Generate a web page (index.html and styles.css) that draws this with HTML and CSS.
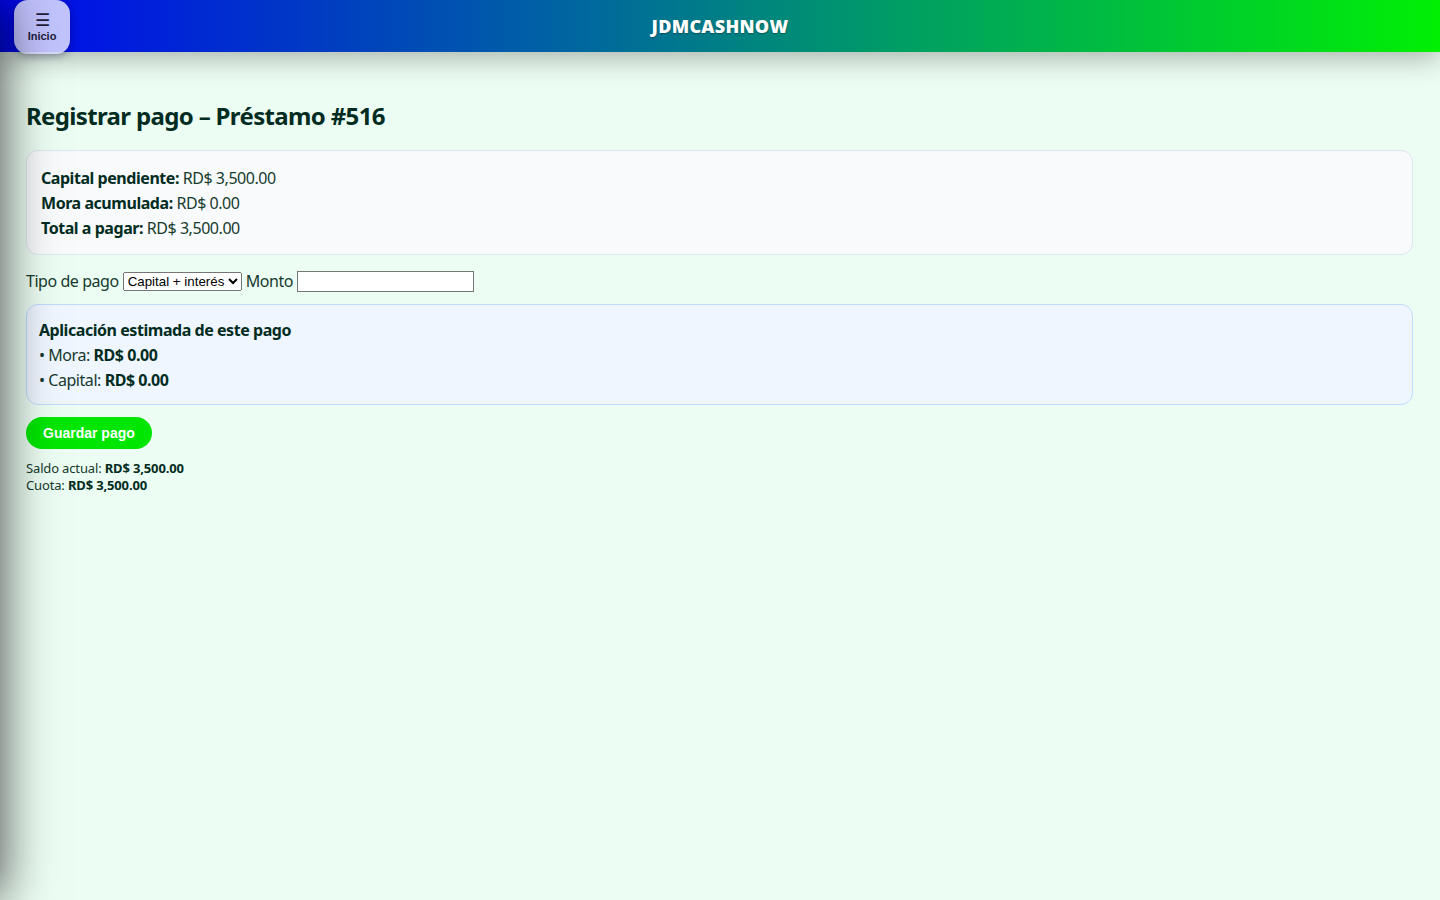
FILE: index.html
```html
<!DOCTYPE html>
<html lang="es">
<head>
<meta charset="utf-8">
<title>Registrar pago</title>
<link rel="stylesheet" href="styles.css">
</head>
<body>
<aside class="drawer"></aside>
<header class="topbar">
  <button class="menu-btn" type="button">
    <span class="menu-icon">☰</span>
    <span class="menu-label">Inicio</span>
  </button>
  <div class="brand">JDMCASHNOW</div>
</header>
<main class="page">
  <h2 class="title">Registrar pago – Préstamo #516</h2>
  <section class="card summary">
    <div><b>Capital pendiente:</b> RD$ 3,500.00</div>
    <div><b>Mora acumulada:</b> RD$ 0.00</div>
    <div><b>Total a pagar:</b> RD$ 3,500.00</div>
  </section>
  <form class="pay-form">
    <div class="row">
      <label>Tipo de pago</label>
      <select><option>Capital + interés</option></select>
      <label>Monto</label>
      <input type="text">
    </div>
    <section class="card estimate">
      <div class="est-title">Aplicación estimada de este pago</div>
      <div>• Mora: <b>RD$ 0.00</b></div>
      <div>• Capital: <b>RD$ 0.00</b></div>
    </section>
    <button class="save-btn" type="button">Guardar pago</button>
  </form>
  <div class="meta">
    <div>Saldo actual: <b>RD$ 3,500.00</b></div>
    <div>Cuota: <b>RD$ 3,500.00</b></div>
  </div>
</main>
</body>
</html>
```
FILE: styles.css
```css
html, body {
  margin: 0;
  padding: 0;
}
body {
  background: #ecfdf3;
  color: #163a2e;
  font-family: "Noto Sans", "Open Sans", sans-serif;
  font-size: 16px;
  letter-spacing: -0.45px;
  min-height: 900px;
  overflow: hidden;
}
b { color: #022c22; }

.drawer {
  position: fixed;
  top: 0;
  left: -280px;
  width: 280px;
  height: 100vh;
  background: #fff;
  box-shadow: 0 0 50px rgba(0, 0, 0, 0.75);
  z-index: 30;
}

.topbar {
  position: relative;
  height: 52px;
  background: linear-gradient(90deg, #0008ee 0%, #0066a0 40%, #009c66 62%, #00f004 100%);
  box-shadow: 0 6px 28px rgba(0, 0, 0, 0.3);
  display: flex;
  align-items: flex-start;
  justify-content: center;
  z-index: 10;
  letter-spacing: 0;
}
.menu-btn {
  position: absolute;
  left: 14px;
  top: 0;
  width: 56px;
  height: 54px;
  border: none;
  border-radius: 14px;
  background: rgba(220, 220, 255, 0.88);
  box-shadow: 0 2px 8px rgba(0, 0, 50, 0.35);
  display: flex;
  flex-direction: column;
  align-items: center;
  justify-content: center;
  padding: 0;
  color: #1c1c3a;
  font-family: "Liberation Sans", Arial, sans-serif;
}
.menu-icon {
  font-size: 17px;
  line-height: 17px;
}
.menu-label {
  font-size: 11px;
  font-weight: 700;
  line-height: 14px;
}
.brand {
  color: #fff;
  font-family: "Open Sans", "Noto Sans", sans-serif;
  font-weight: 800;
  font-size: 18px;
  line-height: 52px;
  letter-spacing: 0.3px;
  text-shadow: 0 1px 2px rgba(0, 0, 0, 0.35);
}

.page {
  padding: 0 27px 0 26px;
}
.title {
  margin: 48px 0 18px;
  font-size: 24px;
  line-height: 32px;
  font-weight: 700;
  letter-spacing: -0.65px;
  color: #022c22;
}
.card {
  border-radius: 12px;
  line-height: 25px;
}
.summary {
  background: #f8fafc;
  border: 1px solid #dde5ee;
  padding: 15px 14px 13px;
}
.row {
  display: flex;
  align-items: center;
  gap: 4px;
  margin: 14px 0 10px;
  line-height: 25px;
}
.row select {
  font-family: "Liberation Sans", Arial, sans-serif;
  font-size: 13.33px;
  letter-spacing: 0;
  height: 19px;
  padding: 0;
  color: #000;
}
.row input {
  font-family: "Liberation Sans", Arial, sans-serif;
  font-size: 13.33px;
  width: 171px;
  height: 17px;
  padding: 1px 2px;
  border: 1px solid #767676;
}
.estimate {
  background: #eff6ff;
  border: 1px solid #bfdbfe;
  padding: 13px 12px 11px;
}
.est-title {
  font-weight: 700;
  color: #022c22;
}
.save-btn {
  margin-top: 12px;
  height: 32px;
  padding: 0 17px;
  border: none;
  border-radius: 16px;
  background: #00e600;
  color: #fff;
  font-family: "Liberation Sans", Arial, sans-serif;
  font-weight: 700;
  font-size: 14px;
  letter-spacing: 0;
}
.meta {
  margin-top: 11px;
  font-size: 13px;
  letter-spacing: -0.15px;
  line-height: 17px;
}
```
